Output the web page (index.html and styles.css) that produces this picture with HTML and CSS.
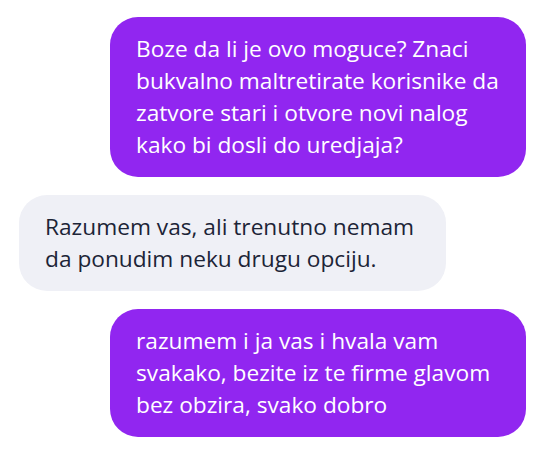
FILE: index.html
```html
<!DOCTYPE html>
<html lang="en">
<head>
    <meta charset="UTF-8">
    <meta name="viewport" content="width=device-width, initial-scale=1.0">
    <title>Chat</title>
    <link rel="stylesheet" href="styles.css">
</head>
<body>

<div class="chat">
    <div class="message sent">Boze da li je ovo moguce? Znaci bukvalno maltretirate korisnike da zatvore stari i otvore novi nalog kako bi dosli do uredjaja?</div>
    <div class="message received">Razumem vas, ali trenutno nemam da ponudim neku drugu opciju.</div>
    <div class="message sent">razumem i ja vas i hvala vam svakako, bezite iz te firme glavom bez obzira, svako dobro</div>
</div>

</body>
</html>
```

FILE: styles.css
```css
body {
    font-family: "Open Sans", sans-serif;
    background-color: #fff;
    margin: 0;
}
.chat {
    display: flex;
    flex-direction: column;
    gap: 18px;
    padding: 17px 8px 17px 19px;
}
.message {
    padding: 16px 26px;
    border-radius: 28px;
    font-size: 22.7px;
    line-height: 32px;
}
.sent {
    align-self: flex-end;
    max-width: 364px;
    background-color: #9126f0;
    color: #fff;
}
.received {
    align-self: flex-start;
    max-width: 375px;
    background-color: #eff0f6;
    color: #1c2437;
}
```
